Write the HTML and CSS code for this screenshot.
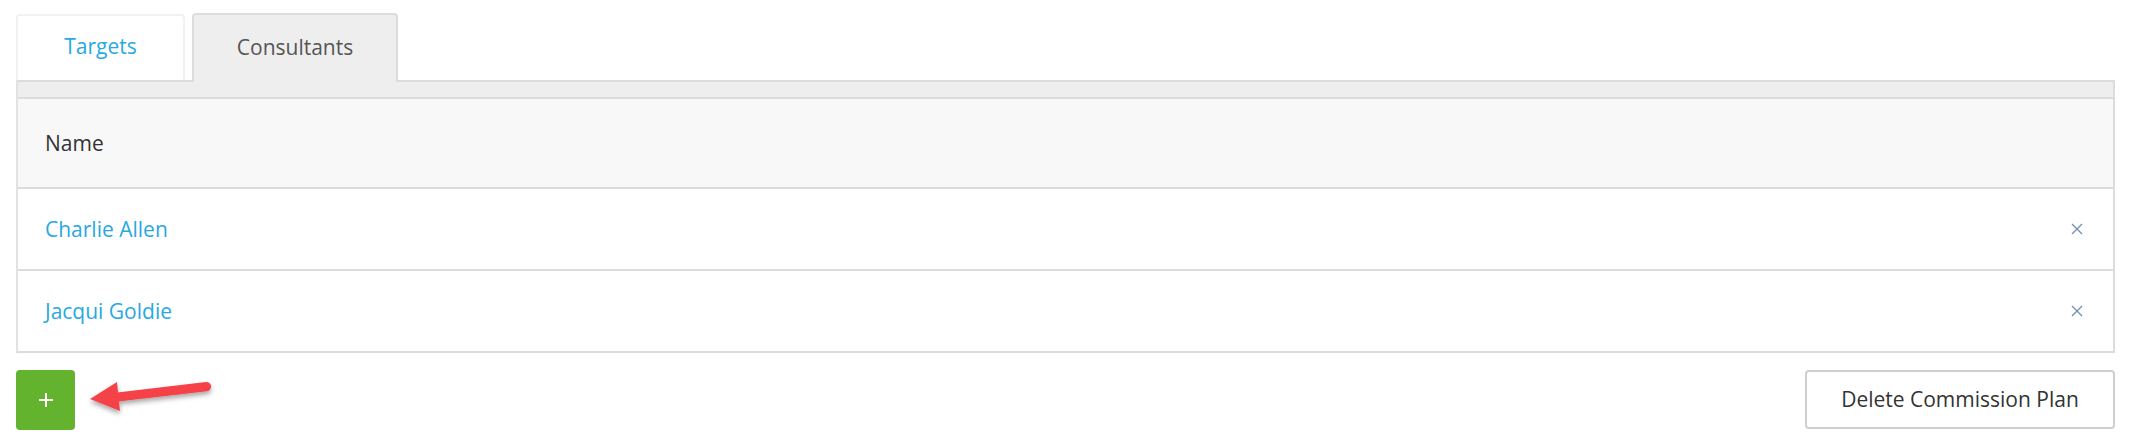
FILE: index.html
```html
<!DOCTYPE html>
<html>
<head>
<meta charset="utf-8">
<link rel="stylesheet" href="styles.css">
</head>
<body>
<div class="page">
  <div class="tabs">
    <div class="tab tab-link">Targets</div>
    <div class="tab tab-active">Consultants</div>
  </div>
  <div class="panel">
    <div class="band"></div>
    <div class="row row-head">Name</div>
    <div class="row">
      <span class="name">Charlie Allen</span>
      <svg class="remove" width="12" height="12" viewBox="0 0 12 12"><path d="M1 1L11 11M11 1L1 11" stroke="#6f8fb2" stroke-width="1.3" fill="none"/></svg>
    </div>
    <div class="row">
      <span class="name">Jacqui Goldie</span>
      <svg class="remove" width="12" height="12" viewBox="0 0 12 12"><path d="M1 1L11 11M11 1L1 11" stroke="#6f8fb2" stroke-width="1.3" fill="none"/></svg>
    </div>
  </div>
  <div class="footer">
    <div class="add-wrap">
      <button class="btn-add"><svg width="16" height="16" viewBox="0 0 16 16"><path d="M8 1V15M1 8H15" stroke="#fff" stroke-width="2" fill="none"/></svg></button>
      <svg class="arrow" width="130" height="50" viewBox="0 0 130 50">
        <defs>
          <filter id="sh" x="-20%" y="-40%" width="140%" height="180%">
            <feDropShadow dx="0" dy="3" stdDeviation="2.5" flood-color="#000" flood-opacity="0.35"/>
          </filter>
        </defs>
        <g filter="url(#sh)" fill="#f5434a">
          <path d="M24 18 L117 7 A4.6 4.6 0 0 1 118 16.2 L25 27 Z"/>
          <path d="M1 24 L28 7 L31 36 Z"/>
        </g>
      </svg>
    </div>
    <button class="btn-delete">Delete Commission Plan</button>
  </div>
</div>
</body>
</html>
```

FILE: styles.css
```css
* { box-sizing: border-box; }
html, body { margin: 0; padding: 0; background: #fff; }
body { font-family: "Open Sans", "Liberation Sans", sans-serif; font-size: 21px; color: #333; }
.page { padding: 13px 18px 0 16px; }
.tabs { display: flex; align-items: flex-end; gap: 7px; height: 67px; }
.tab {
  height: 66px;
  display: flex; align-items: center; justify-content: center;
  border-radius: 4px 4px 0 0;
  font-size: 21px;
  padding-bottom: 4px;
}
.tab-link {
  width: 169px;
  border: 2px solid #f1f1f1; border-bottom: none;
  color: #27a9e1; background: #fff;
}
.tab-active {
  width: 206px; height: 69px;
  border: 2px solid #dcdcdc; border-bottom: none;
  background: #eee; color: #555;
  margin-bottom: -2px; position: relative; z-index: 1;
}
.panel {
  border-left: 2px solid #e2e2e2;
  border-right: 2px solid #dcdcdc;
  border-bottom: 2px solid #dcdcdc;
}
.band { height: 17px; background: #eee; border-top: 2px solid #dcdcdc; }
.row {
  display: flex; align-items: center; justify-content: space-between;
  border-top: 2px solid #dcdcdc;
  height: 82px;
  padding: 0 30px 0 27px;
}
.row-head { background: #f8f8f8; height: 90px; color: #333; }
.name { color: #27a9e1; }
.remove { display: block; }
.footer { display: flex; justify-content: space-between; align-items: flex-start; margin-top: 17px; }
.add-wrap { position: relative; }
.btn-add {
  width: 59px; height: 60px;
  background: #63b32f; border: none; border-radius: 4px;
  display: flex; align-items: center; justify-content: center;
  padding: 0; margin: 0;
}
.arrow { position: absolute; left: 73px; top: 5px; overflow: visible; }
.btn-delete {
  width: 310px; height: 59px;
  background: #fff; border: 2px solid #cfcfcf; border-radius: 4px;
  font-family: "Open Sans", "Liberation Sans", sans-serif; font-size: 21px; color: #333;
  padding: 0 0 2px 0; margin: 0;
}
```
